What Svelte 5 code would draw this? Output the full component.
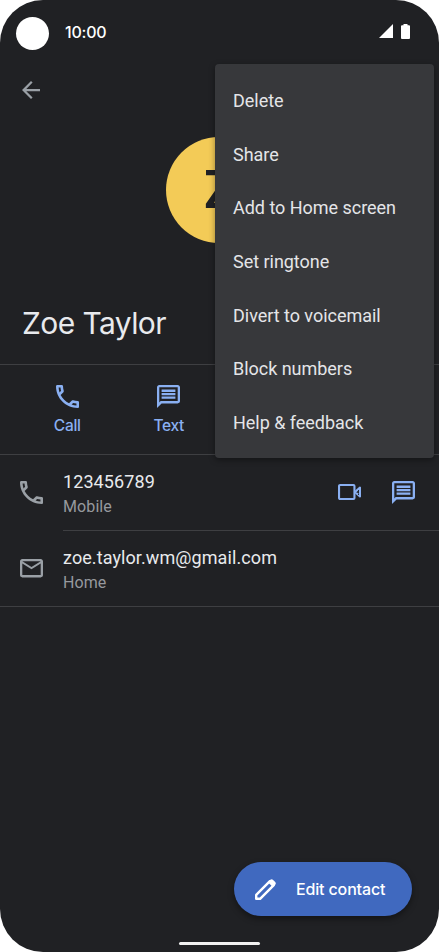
<script>
  const menu = ['Delete', 'Share', 'Add to Home screen', 'Set ringtone', 'Divert to voicemail', 'Block numbers', 'Help & feedback'];
</script>

{#snippet phone()}
  <svg width="23" height="23" viewBox="3 3 18 18"><path fill="currentColor" d="M6.54 5c.06.89.21 1.76.45 2.59l-1.2 1.2c-.41-1.2-.67-2.47-.76-3.79h1.51m9.86 12.02c.85.24 1.72.39 2.6.45v1.49c-1.32-.09-2.59-.35-3.8-.75l1.2-1.19M7.5 3H4c-.55 0-1 .45-1 1 0 9.39 7.61 17 17 17 .55 0 1-.45 1-1v-3.49c0-.55-.45-1-1-1-1.24 0-2.45-.2-3.57-.57-.1-.04-.21-.05-.31-.05-.26 0-.51.1-.71.29l-2.2 2.2c-2.83-1.45-5.15-3.76-6.59-6.59l2.2-2.2c.28-.28.36-.67.25-1.02C8.7 6.45 8.5 5.25 8.5 4c0-.55-.45-1-1-1z" /></svg>
{/snippet}

{#snippet message()}
  <svg width="23" height="23" viewBox="2 2 20 20"><path fill="currentColor" d="M20 2H4c-1.1 0-1.99.9-1.99 2L2 22l4-4h14c1.1 0 2-.9 2-2V4c0-1.1-.9-2-2-2zm0 14H5.17L4 17.17V4h16v12zM6 12h12v2H6v-2zm0-3h12v2H6V9zm0-3h12v2H6V6z" /></svg>
{/snippet}

<main class="screen">
  <header class="status">
    <span class="camera"></span>
    <span class="time">10:00</span>
    <svg class="signal" width="14" height="14" viewBox="0 0 14 14"><path fill="#fff" d="M14 0v14H0z" /></svg>
    <svg class="battery" width="9" height="15" viewBox="0 0 9 15"><path fill="#fff" d="M2.5 0h4v1.3H8q1 0 1 1V14q0 1-1 1H1q-1 0-1-1V2.3q0-1 1-1h1.500z" /></svg>
  </header>
  <nav class="toolbar">
    <svg width="18" height="18" viewBox="4 4 16 16"><path fill="currentColor" d="M20 11H7.830l5.590-5.590L12 4l-8 8 8 8 1.410-1.410L7.830 13H20v-2z" /></svg>
  </nav>
  <div class="hero"><div class="avatar">Z</div></div>
  <h1>Zoe Taylor</h1>
  <section class="actions">
    <div class="action">{@render phone()}<span>Call</span></div>
    <div class="action">{@render message()}<span>Text</span></div>
  </section>
  <section class="row">
    <div class="lead">{@render phone()}</div>
    <div class="body">
      <div class="info"><div class="value">123456789</div><div class="kind">Mobile</div></div>
      <div class="tools">
        <svg width="23" height="16" viewBox="0 0 23 16" fill="none" stroke="currentColor" stroke-width="2.100" stroke-linejoin="round"><rect x="1.050" y="1.050" width="15.400" height="13.900" rx="1" /><path d="M17 8l5-4.400v8.800z" /></svg>
        {@render message()}
      </div>
    </div>
  </section>
  <section class="row last">
    <div class="lead"><svg width="23" height="18.400" viewBox="2 4 20 16"><path fill="currentColor" d="M22 6c0-1.100-.9-2-2-2H4c-1.100 0-2 .9-2 2v12c0 1.100.9 2 2 2h16c1.100 0 2-.9 2-2V6zm-2 0l-8 5-8-5h16zm0 12H4V8l8 5 8-5v10z" /></svg></div>
    <div class="body">
      <div class="info"><div class="value">zoe.taylor.wm@gmail.com</div><div class="kind">Home</div></div>
    </div>
  </section>
  <footer>
    <button>
      <svg width="21" height="21" viewBox="0 0 21 21"><path fill="none" stroke="#fff" stroke-width="2.400" stroke-linejoin="round" d="M1.200 19.800v-3.900L14.900 2.200l3.900 3.900L5.100 19.800z" /><path fill="#fff" d="M12.900 3.200l2.400-2.400q1.300-1.200 2.600 0l2.300 2.300q1.200 1.300 0 2.600l-2.400 2.400z" /></svg>
      <span>Edit contact</span>
    </button>
    <div class="handle"></div>
  </footer>
  <div class="menu">
    {#each menu as item}<div class="item">{item}</div>{/each}
  </div>
</main>

<style>
  :global(body) { background: #fff; }
  svg { display: block; flex: none; }
  .screen {
    position: relative; box-sizing: border-box; width: 439px; height: 952px;
    display: flex; flex-direction: column; overflow: hidden;
    background: #202124; color: #e8eaed; border-radius: 43px;
    font-family: Roboto, sans-serif;
  }
  .status { display: flex; align-items: center; height: 64px; padding: 0 29px 0 16px; box-sizing: border-box; }
  .camera { width: 33px; height: 33px; border-radius: 50%; background: #fff; margin-top: 3px; }
  .time { margin-left: 16px; flex: 1; font: 500 16px/20px Inter, sans-serif; letter-spacing: -0.2px; color: #fff; }
  .signal { margin-right: 8px; margin-top: -2px; }
  .battery { margin-top: -2px; }
  .toolbar { height: 52px; display: flex; align-items: center; padding-left: 22px; color: #9aa0a6; }
  .hero { height: 147px; display: flex; justify-content: center; align-items: center; padding-right: 1px; }
  .avatar { width: 106px; height: 106px; border-radius: 50%; background: #f3cb57; color: #202124; display: flex; align-items: center; justify-content: center; box-sizing: border-box; padding-left: 2px; font: 500 54px/1 Roboto, sans-serif; }
  h1 { margin: 0; height: 102px; box-sizing: border-box; padding: 41px 0 0 22px; font: 400 30px/38px Inter, sans-serif; letter-spacing: -0.6px; border-bottom: 1px solid #3e3f42; }
  .actions { display: flex; height: 90px; box-sizing: border-box; padding: 20px 0 0 16.500px; border-bottom: 1px solid #3e3f42; color: #8ab0f2; }
  .action { width: 101.500px; display: flex; flex-direction: column; align-items: center; font: 500 15.500px/20px Inter, sans-serif; letter-spacing: -0.3px; gap: 8px; }
  .row { display: flex; height: 76px; }
  .lead { width: 63px; box-sizing: border-box; padding-left: 20px; padding-bottom: 1px; display: flex; align-items: center; color: #9aa0a6; }
  .body { flex: 1; display: flex; justify-content: space-between; box-sizing: border-box; border-bottom: 1px solid #3e3f42; }
  .last { box-sizing: border-box; border-bottom: 1px solid #3e3f42; }
  .last .lead { padding-bottom: 0; }
  .last .body { border: 0; }
  .info { padding-top: 15px; }
  .value { font-size: 18px; line-height: 24px; white-space: nowrap; letter-spacing: .09px; }
  .kind { font-size: 16px; line-height: 20px; margin-top: 3px; color: #96999e; letter-spacing: .1px; }
  .tools { display: flex; align-items: center; gap: 31px; padding: 0 24px 1px 0; color: #8ab0f2; }
  footer { margin-top: auto; height: 90px; display: flex; flex-direction: column; align-items: flex-end; }
  button { display: flex; align-items: center; width: 178px; height: 54px; margin-right: 27px; padding: 0 0 0 21px; gap: 20px; border: 0; border-radius: 27px; background: #4069bf; color: #fff; font: 500 16px/20px Inter, sans-serif; letter-spacing: -0.15px; box-shadow: 0 3px 6px rgba(0,0,0,.4); white-space: nowrap; }
  .handle { align-self: center; width: 81px; height: 3px; margin-top: 26px; border-radius: 2px; background: #f1f1f1; }
  .menu { position: absolute; top: 64px; right: 5px; width: 219px; height: 394px; box-sizing: border-box; padding: 10px 18px; border-radius: 4px; background: #37383b; box-shadow: 0 2px 6px rgba(0,0,0,.4); }
  .item { height: 53.700px; line-height: 54.200px; font-size: 18px; letter-spacing: -0.03px; color: #e4e5e8; }
</style>
